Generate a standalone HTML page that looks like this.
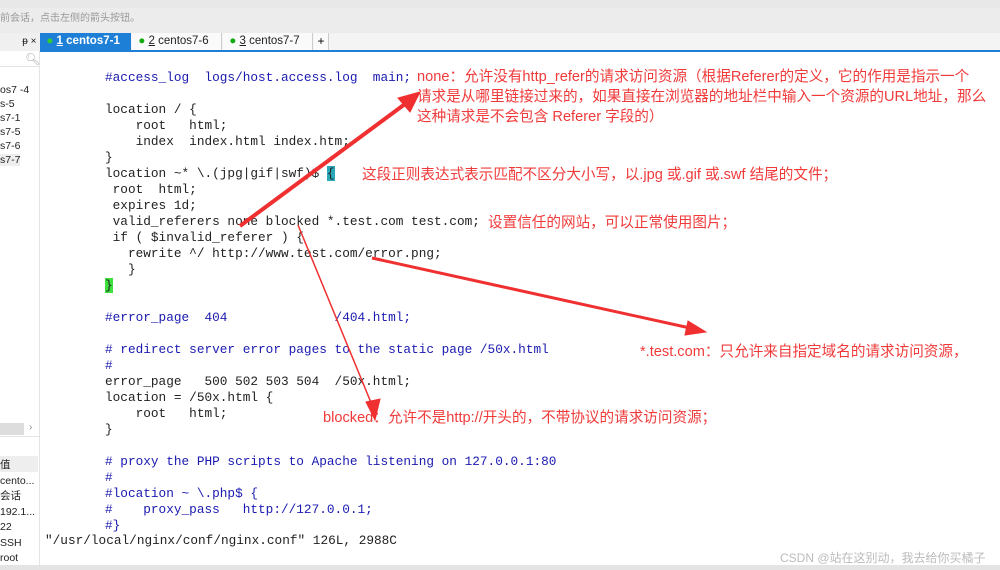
<!DOCTYPE html>
<html><head><meta charset="utf-8"><style>
body{margin:0;width:1000px;height:570px;overflow:hidden;background:#fff;position:relative;font-family:"Liberation Sans","Noto Sans CJK SC",sans-serif}
.a{position:absolute;white-space:pre}
.c{font-family:"Liberation Mono",monospace;font-size:12.75px;line-height:16px;color:#222;left:105px}
.b{color:#1a1ab0}
.r{color:#f03a3a;font-size:14.6px;line-height:20px;font-family:"Liberation Sans","Noto Sans CJK SC",sans-serif}
.sb{font-size:10.5px;color:#222;left:0}
</style></head><body>
<div class="a" style="left:0;top:0;width:1000px;height:8px;background:#e8e8e8"></div>
<div class="a" style="left:0;top:8px;width:1000px;height:25px;background:#ececec;font-size:10px;color:#999;line-height:22px">前会话，点击左侧的箭头按钮。</div>
<div class="a" style="left:0;top:33px;width:40px;height:18px;background:#f0f0f0;font-size:10px;line-height:17px;color:#222">&nbsp;&nbsp;&nbsp;&nbsp;&nbsp;&nbsp;&nbsp;&nbsp;ᵽ ×</div>
<div class="a" style="left:40px;top:33px;width:960px;height:17px;background:#f4f4f4"></div>
<div class="a" style="left:40px;top:33px;width:91px;height:17px;background:#1e7fd6;color:#fff;font-size:11.5px;font-weight:bold;line-height:17px">  <span style="color:#3c3">●</span> <u>1</u> centos7-1     <span style="color:#8bbce8;font-weight:normal">×</span></div>
<div class="a" style="left:132px;top:33px;width:89px;height:17px;background:#fafafa;font-size:11.5px;line-height:17px;color:#222;border-right:1px solid #ccc">  <span style="color:#1a1">●</span> <u>2</u> centos7-6     <span style="color:#ccc">×</span></div>
<div class="a" style="left:223px;top:33px;width:89px;height:17px;background:#fafafa;font-size:11.5px;line-height:17px;color:#222;border-right:1px solid #ccc">  <span style="color:#1a1">●</span> <u>3</u> centos7-7     <span style="color:#ccc">×</span></div>
<div class="a" style="left:314px;top:33px;width:14px;height:17px;background:#fafafa;font-size:12px;line-height:17px;text-align:center;border-right:1px solid #ccc">+</div>
<div class="a" style="left:40px;top:50px;width:960px;height:2px;background:#1e7fd6"></div>
<div class="a" style="left:0;top:51px;width:39px;height:515px;background:#fff;border-right:1px solid #e4e4e4"></div>
<div class="a" style="left:25px;top:52px;font-size:12px;color:#aaa">🔍︎</div>
<div class="a" style="left:0;top:66px;width:39px;height:1px;background:#e4e4e4"></div>
<div class="a sb" style="top:83px;line-height:14px">os7 -4
s-5
s7-1
s7-5
s7-6
<span style="background:#eee">s7-7</span></div>
<div class="a" style="left:0;top:423px;width:24px;height:12px;background:#ddd"></div>
<div class="a" style="left:29px;top:422px;font-size:10px;color:#888">›</div>
<div class="a" style="left:0;top:436px;width:39px;height:1px;background:#e4e4e4"></div>
<div class="a" style="left:0;top:456px;width:38px;height:16px;background:#eee"></div>
<div class="a sb" style="top:458px;line-height:15.5px">值
cento...
会话
192.1...
22
SSH
root</div>
<div class="a" style="left:0;top:565px;width:1000px;height:5px;background:#e4e4e4"></div>

<div class="a c b" style="top:70px">#access_log  logs/host.access.log  main;</div>
<div class="a c" style="top:102px">location / {
    root   html;
    index  index.html index.htm;
}
location ~* \.(jpg|gif|swf)$ <span style="background:#2aa8b8">{</span>
 root  html;
 expires 1d;
 valid_referers none blocked *.test.com test.com;
 if ( $invalid_referer ) {
   rewrite ^/ http://www.test.com/error.png;
   }
<span style="background:#3de03d">}</span></div>
<div class="a c b" style="top:310px">#error_page  404              /404.html;

# redirect server error pages to the static page /50x.html
#</div>
<div class="a c" style="top:374px">error_page   500 502 503 504  /50x.html;
location = /50x.html {
    root   html;
}</div>
<div class="a c b" style="top:454px"># proxy the PHP scripts to Apache listening on 127.0.0.1:80
#
#location ~ \.php$ {
#    proxy_pass   http://127.0.0.1;
#}</div>
<div class="a c" style="left:45px;top:533px">"/usr/local/nginx/conf/nginx.conf" 126L, 2988C</div>

<div class="a r" style="left:417px;top:67px">none：允许没有http_refer的请求访问资源（根据Referer的定义，它的作用是指示一个
请求是从哪里链接过来的，如果直接在浏览器的地址栏中输入一个资源的URL地址，那么
这种请求是不会包含 Referer 字段的）</div>
<div class="a r" style="left:362px;top:165px">这段正则表达式表示匹配不区分大小写，以.jpg 或.gif 或.swf 结尾的文件；</div>
<div class="a r" style="left:488px;top:213px">设置信任的网站，可以正常使用图片；</div>
<div class="a r" style="left:640px;top:342px">*.test.com：只允许来自指定域名的请求访问资源，</div>
<div class="a r" style="left:323px;top:408px">blocked：允许不是http://开头的，不带协议的请求访问资源；</div>
<div class="a" style="left:780px;top:549px;font-size:12px;color:#bbb">CSDN @站在这别动，我去给你买橘子</div>

<svg class="a" style="left:0;top:0" width="1000" height="570">
<g fill="#f03030" stroke="#f03030">
<line x1="240" y1="226" x2="405" y2="104" stroke-width="4"/>
<polygon points="420,92 398,98 410,112" stroke-width="1"/>
<line x1="298" y1="225" x2="372" y2="405" stroke-width="1.5"/>
<polygon points="375,420 366,402 380,399" stroke-width="1"/>
<line x1="372" y1="258" x2="690" y2="328" stroke-width="3"/>
<polygon points="706,332 688,321 685,335" stroke-width="1"/>
</g>
</svg>
</body></html>
